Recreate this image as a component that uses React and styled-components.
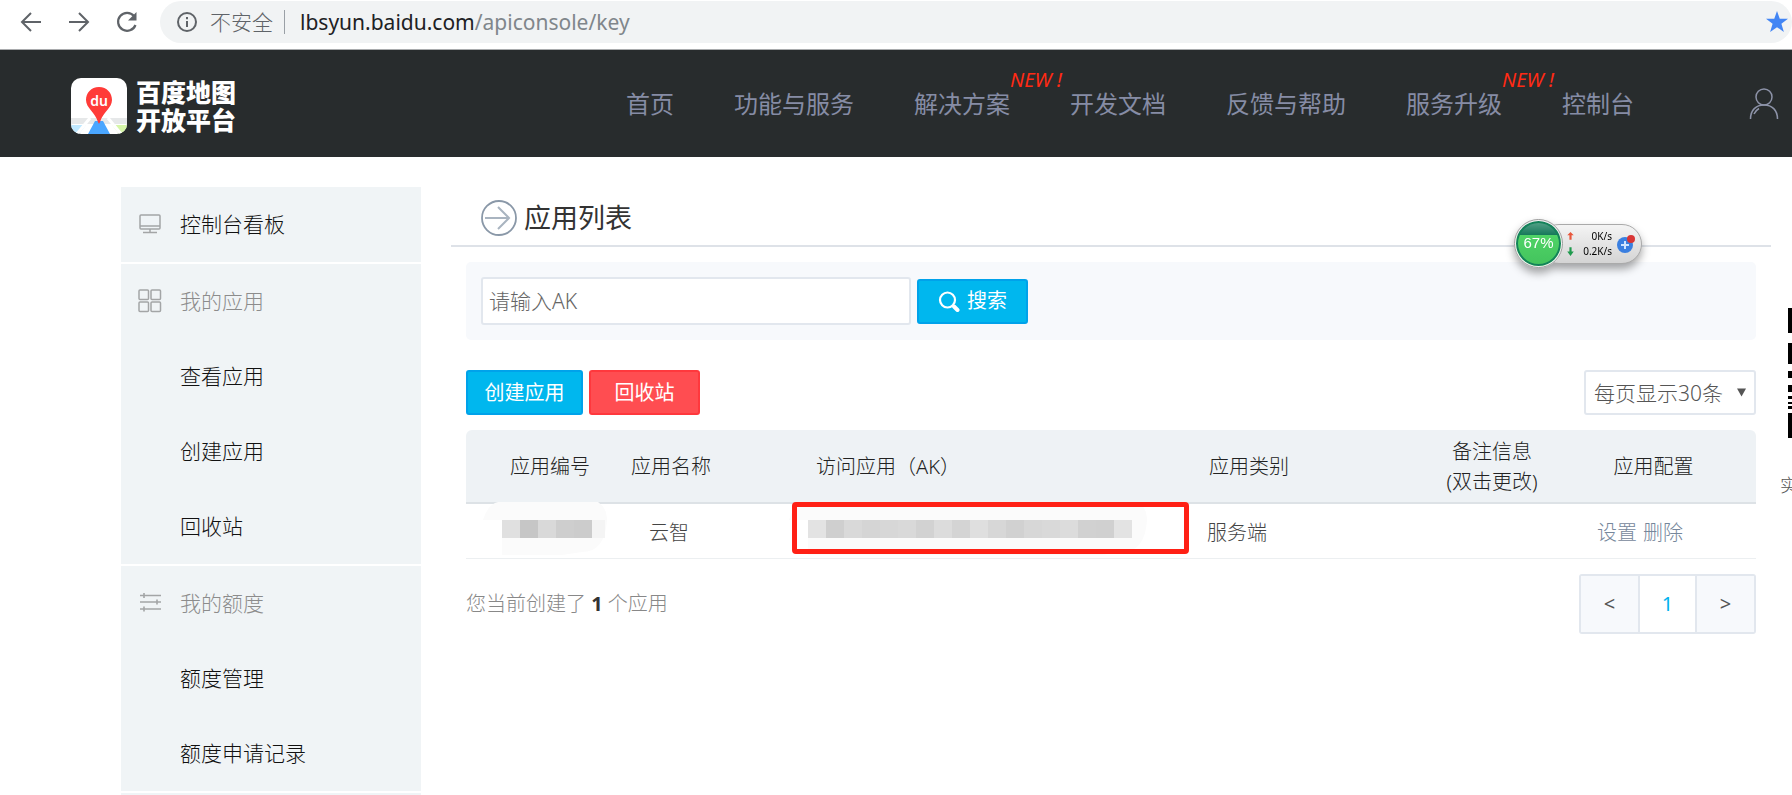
import React from "react";
import styled, { createGlobalStyle } from "styled-components";

const GlobalStyle = createGlobalStyle`
  * {
    box-sizing: border-box;
  }
  body {
    margin: 0;
    background: #fff;
    color: #333;
    font-family: "Noto Sans", "Noto Sans CJK SC", sans-serif;
    font-size: 20px;
    line-height: 30px;
  }
  a {
    color: inherit;
    text-decoration: none;
  }
  button, input, select {
    margin: 0;
    font: inherit;
  }
  svg {
    display: block;
    flex: none;
  }
`;

const Page = styled.div`
  height: 100vh;
  display: flex;
  flex-direction: column;
  overflow: hidden;
`;

/* browser bar */
const BrowserBar = styled.div`
  display: flex;
  align-items: flex-start;
  height: 50px;
  flex: none;
  padding: 1px 0 0 18px;
  border-bottom: 1px solid #a9abad;
`;
const BarButton = styled.button`
  width: 26px;
  height: 42px;
  margin-right: 22px;
  padding: 0;
  display: flex;
  align-items: center;
  justify-content: center;
  border: 0;
  background: none;
`;
const Address = styled.div`
  flex: 1;
  height: 42px;
  margin-left: -2px;
  padding: 0 4px 0 16px;
  display: flex;
  align-items: center;
  border-radius: 21px;
  background: #f1f3f4;
  color: #5f6368;
  font-size: 21px;
  white-space: nowrap;
`;
const Insecure = styled.span`
  margin-left: 12px;
  padding-right: 11px;
  font-weight: 300;
`;
const Url = styled.div`
  flex: 1;
  margin-left: 15px;
  color: #80868b;
`;
const Domain = styled.span`
  color: #202124;
`;
const BarDivider = styled.span`
  width: 1px;
  height: 24px;
  background: #9aa0a6;
`;

/* site header */
const Header = styled.header`
  display: flex;
  align-items: center;
  height: 107px;
  flex: none;
  padding: 0 13px 0 71px;
  background: #282c2d;
`;
const Brand = styled.a`
  display: flex;
  align-items: center;
  gap: 9px;
  padding-top: 4px;
`;
const BrandName = styled.span`
  color: #fff;
  font-size: 25px;
  font-weight: 900;
  line-height: 28px;
`;
const Nav = styled.nav`
  display: flex;
  gap: 60px;
  margin: 0 115px 0 auto;
  font-size: 24px;
  color: #868ca5;
  white-space: nowrap;
`;
const NavLink = styled.a`
  position: relative;
`;
const NewTag = styled.em`
  position: absolute;
  left: 100%;
  top: -24px;
  color: #ff2a14;
  font-size: 20px;
`;

/* content */
const Content = styled.div`
  flex: 1;
  min-height: 0;
  display: flex;
  padding: 30px 0 0 121px;
`;
const Sidebar = styled.aside`
  width: 300px;
  flex: none;
  display: flex;
  flex-direction: column;
  gap: 2px;
  margin-right: 30px;
  font-size: 21px;
  font-weight: 300;
`;
const MenuGroup = styled.div`
  flex: ${(p) => (p.$fill ? "1" : "none")};
  background: #f0f4f6;
`;
const MenuItem = styled.a`
  display: flex;
  align-items: center;
  height: 75px;
  padding-bottom: 2px;
  color: ${(p) => (p.$muted ? "#8c8c8c" : "#111")};
`;
const MenuIcon = styled.span`
  width: 59px;
  padding-left: 17px;
`;
const Main = styled.main`
  flex: 1;
  min-width: 0;
`;
const TitleBar = styled.div`
  display: flex;
  align-items: center;
  gap: 7px;
  height: 60px;
  padding: 4px 0 0 30px;
  border-bottom: 2px solid #dee2e8;
`;
const Title = styled.h1`
  margin: 0;
  font-size: 27px;
  font-weight: 400;
  line-height: 40px;
`;
const Panel = styled.div`
  padding: 15px;
`;
const SearchBox = styled.form`
  display: flex;
  align-items: center;
  gap: 6px;
  height: 78px;
  padding: 0 15px;
  border-radius: 5px;
  background: #f7f9fc;
`;
const SearchInput = styled.input`
  width: 430px;
  height: 48px;
  padding: 0 6px;
  border: 2px solid #e2e7ee;
  border-radius: 3px;
  background: #fff;
  font-size: 21px;
  font-weight: 300;
  &::placeholder {
    color: #666;
    opacity: 1;
  }
`;
const Button = styled.button`
  display: flex;
  align-items: center;
  justify-content: center;
  gap: 7px;
  min-width: ${(p) => (p.$wide ? "117px" : "111px")};
  height: 45px;
  padding: 0;
  border: 2px solid ${(p) => (p.$danger ? "#ff383d" : "#00a2ea")};
  border-radius: 3px;
  background: ${(p) => (p.$danger ? "#ff4d51" : "#00b7ee")};
  color: #fff;
`;
const Toolbar = styled.div`
  display: flex;
  gap: 6px;
  margin: 30px 0 15px;
`;
const SelectBox = styled.div`
  display: grid;
  align-items: center;
  margin-left: auto;
  & > * {
    grid-area: 1 / 1;
  }
`;
const PageSize = styled.select`
  width: 172px;
  height: 45px;
  padding: 0 8px;
  appearance: none;
  border: 2px solid #e2e7ee;
  border-radius: 3px;
  background: #fff;
  color: #555;
  font-size: 21px;
  font-weight: 300;
`;
const SelectArrow = styled.svg`
  justify-self: end;
  margin-right: 10px;
  pointer-events: none;
`;
const Table = styled.table`
  width: 100%;
  table-layout: fixed;
  border-collapse: separate;
  border-spacing: 0;
`;
const Col = styled.col`
  width: ${(p) => p.$w};
`;
const Th = styled.th`
  height: 74px;
  padding: 2px 0 0 ${(p) => p.$left || 0}px;
  border-bottom: 2px solid #dde2e6;
  background: #eef2f5;
  color: #222;
  font-weight: 300;
  text-align: ${(p) => (p.$center ? "center" : "left")};
  &:first-child {
    border-top-left-radius: 6px;
  }
  &:last-child {
    border-top-right-radius: 6px;
    padding-right: 32px;
  }
`;
const Td = styled.td`
  position: relative;
  height: 55px;
  padding: 4px ${(p) => (p.$center ? 4 : 0)}px 0 ${(p) => p.$left || 0}px;
  border-bottom: 1px solid #eceff1;
  color: #444;
  font-weight: 300;
  text-align: ${(p) => (p.$center ? "center" : "left")};
`;
const Marker = styled.div`
  position: absolute;
  left: 81px;
  right: 16px;
  top: -2px;
  height: 52px;
  border: 5px solid #ff2015;
  border-radius: 4px;
`;
const Action = styled.a`
  margin-right: 6px;
  color: #76879b;
`;
const Footer = styled.div`
  display: flex;
  align-items: center;
  justify-content: space-between;
  margin-top: 15px;
  color: #888;
  font-weight: 300;
`;
const Count = styled.b`
  color: #333;
  font-weight: 700;
`;
const Pager = styled.nav`
  display: flex;
  height: 60px;
  border: 2px solid #e2e7ee;
  border-radius: 3px;
`;
const PagerButton = styled.button`
  width: ${(p) => (p.$current ? "59px" : "57px")};
  padding: 0;
  border: 0 solid #e2e7ee;
  border-width: ${(p) => (p.$current ? "0 2px" : "0")};
  background: ${(p) => (p.$current ? "#fff" : "#f7f9fc")};
  color: ${(p) => (p.$current ? "#00b2ee" : "#555")};
  font-weight: 400;
`;
const Rail = styled.aside`
  width: 21px;
  flex: none;
  padding-top: 121px;
  overflow: hidden;
`;
const QrEdge = styled.svg`
  margin-left: 17px;
`;
const RailText = styled.div`
  width: 36px;
  margin: 32px 0 0 9px;
  color: #555;
  font-size: 18px;
  font-weight: 300;
`;

/* floating speed meter */
const Meter = styled.div`
  position: fixed;
  top: 219px;
  right: 150px;
  display: flex;
  align-items: center;
  filter: drop-shadow(0 5px 4px rgba(0, 0, 0, 0.35));
`;
const Ball = styled.div`
  width: 49px;
  height: 49px;
  border: 2px solid #f4f4f4;
  outline: 1px solid #9b9b9b;
  outline-offset: -1px;
  border-radius: 50%;
  background: linear-gradient(#5aa58c, #197a5c 30%, #4fd366 31%, #43c35d);
  box-shadow: inset 0 0 0 2px #14825a;
  color: #fff;
  font-family: "Liberation Sans", sans-serif;
  font-size: 15px;
  line-height: 44px;
  text-align: center;
  z-index: 1;
`;
const Pill = styled.div`
  display: flex;
  align-items: center;
  width: 103px;
  height: 40px;
  margin-left: -24px;
  padding: 0 5px 0 27px;
  border: 1px solid #aaa;
  border-radius: 20px;
  background: linear-gradient(#f4f4f4, #d4d4d4);
`;
const Speeds = styled.div`
  width: 40px;
  margin-right: 4px;
  color: #000;
  font-size: 10px;
  line-height: 15px;
  text-align: right;
`;

const HIDDEN_ID = ["#e0e0e0", "#c6c6c6", "#d9d9d9", "#cecece", "#cccccc"];
const HIDDEN_KEY = [
  "#e3e3e3", "#cfcfcf", "#d9d9d9", "#d5d5d5", "#d7d7d7", "#d9d9d9",
  "#d2d2d2", "#dcdcdc", "#d4d4d4", "#dfdfdf", "#d7d7d7", "#d1d1d1",
  "#d7d7d7", "#d9d9d9", "#dcdcdc", "#d1d1d1", "#d0d0d0", "#e3e3e3",
];

function Mosaic({ colors, tail }) {
  const w = colors.length * 18;
  return (
    <svg width={w + 40} height="54" viewBox={`-19 0 ${w + 40} 54`}>
      <path d={`M-19 18Q-14 2 -4 0H${w + 6}Q${w + 15} 6 ${w + 15} 18Q${w + 13} 50 ${w - 10} 50L${w - 30} 53H0V18Z`} fill="#fbfbfb" />
      {tail && <rect x={w} y="18" width="13" height="18" fill="#f4f4f4" />}
      {colors.map((c, i) => (
        <rect key={i} x={i * 18} y="18" width="18" height="18" fill={c} />
      ))}
    </svg>
  );
}
const MosaicBox = styled.div`
  position: absolute;
  left: ${(p) => p.$left}px;
  top: -2px;
`;

function Logo() {
  return (
    <svg width="56" height="56" viewBox="0 0 56 56">
      <defs>
        <clipPath id="tile">
          <rect width="56" height="56" rx="10" />
        </clipPath>
      </defs>
      <g clipPath="url(#tile)">
        <path d="M0 0H56V56H0z" fill="#fff" />
        <path d="M0 40H56V46H0z" fill="#e6e8e9" />
        <path d="M0 47H15L8 56H0z" fill="#bfe8ff" />
        <path d="M41 47H56V56H48z" fill="#d5f5a8" />
        <path d="M19 40L6 56M37 40L50 56" stroke="#fff" strokeWidth="3" />
        <path d="M24 43H32L39 56H17z" fill="#4aa6ff" />
        <path d="M28 9C20 9 15 15 15 22C15 30 24 34 27 44Q28 47 29 44C32 34 41 30 41 22C41 15 36 9 28 9z" fill="#ff3b38" />
      </g>
      <text x="28" y="28" fill="#fff" fontSize="14" fontWeight="600" textAnchor="middle">du</text>
    </svg>
  );
}

const NAV = [
  { label: "首页" },
  { label: "功能与服务" },
  { label: "解决方案", isNew: true },
  { label: "开发文档" },
  { label: "反馈与帮助" },
  { label: "服务升级", isNew: true },
  { label: "控制台" },
];

const iconProps = { width: 24, height: 24, viewBox: "0 0 24 24", fill: "none", stroke: "#a3a5a6" };

const MonitorIcon = () => (
  <svg {...iconProps} strokeWidth="1.5">
    <rect x="2" y="3" width="20" height="14" rx="1" />
    <path d="M2 14H22M12 17V20M5 20.5H19" />
  </svg>
);
const GridIcon = () => (
  <svg {...iconProps} strokeWidth="1.5">
    <rect x="1" y="1" width="9.5" height="9.5" rx="1" />
    <rect x="13" y="1" width="9.5" height="9.5" rx="1" />
    <rect x="1" y="13" width="9.5" height="9.5" rx="1" />
    <rect x="13" y="13" width="9.5" height="9.5" rx="1" />
  </svg>
);
const SlidersIcon = () => (
  <svg {...iconProps} strokeWidth="1.6">
    <path d="M2 4.5H23M2 11H23M2 18H23M6 2V7M19 8.5V13.5M6 15.5V20.5" />
  </svg>
);

const MENU = [
  [{ label: "控制台看板", icon: <MonitorIcon /> }],
  [
    { label: "我的应用", icon: <GridIcon />, muted: true },
    { label: "查看应用" },
    { label: "创建应用" },
    { label: "回收站" },
  ],
  [
    { label: "我的额度", icon: <SlidersIcon />, muted: true },
    { label: "额度管理" },
    { label: "额度申请记录" },
  ],
];

function App() {
  return (
    <Page>
      <GlobalStyle />
      <BrowserBar>
        <BarButton aria-label="后退">
          <svg width="22" height="22" viewBox="0 0 22 22" fill="none" stroke="#5f6368" strokeWidth="2">
            <path d="M21 11H2M11 2L2 11L11 20" />
          </svg>
        </BarButton>
        <BarButton aria-label="前进">
          <svg width="22" height="22" viewBox="0 0 22 22" fill="none" stroke="#5f6368" strokeWidth="2">
            <path d="M1 11H20M11 2L20 11L11 20" />
          </svg>
        </BarButton>
        <BarButton aria-label="刷新">
          <svg width="24" height="24" viewBox="0 0 24 24" fill="none" stroke="#5f6368" strokeWidth="2.2">
            <path d="M19 6A9 9 0 1 0 20.5 15" />
            <path d="M21.5 2V10.5H13z" fill="#5f6368" stroke="none" />
          </svg>
        </BarButton>
        <Address>
          <svg width="22" height="22" viewBox="0 0 22 22" fill="none" stroke="#5f6368" strokeWidth="2">
            <circle cx="11" cy="11" r="9" />
            <path d="M11 10V16M11 6V8.2" />
          </svg>
          <Insecure>不安全</Insecure>
          <BarDivider />
          <Url>
            <Domain>lbsyun.baidu.com</Domain>/apiconsole/key
          </Url>
          <svg width="22" height="22" viewBox="0 0 24 24" fill="#4285f4">
            <path d="M12 0L15 8.5H24L16.8 13.8L19.5 23L12 17.6L4.5 23L7.2 13.8L0 8.5H9z" />
          </svg>
        </Address>
      </BrowserBar>

      <Header>
        <Brand href="#">
          <Logo />
          <BrandName>
            百度地图
            <br />
            开放平台
          </BrandName>
        </Brand>
        <Nav>
          {NAV.map((item) => (
            <NavLink href="#" key={item.label}>
              {item.label}
              {item.isNew && <NewTag>NEW !</NewTag>}
            </NavLink>
          ))}
        </Nav>
        <svg width="30" height="32" viewBox="0 0 30 32" fill="none" stroke="#8d93a8" strokeWidth="1.5">
          <ellipse cx="15" cy="9" rx="8" ry="8" />
          <path d="M1.5 31C1.5 22 7 17 15 17C23 17 28.5 22 28.5 31M5 26Q6.5 22.5 10 20.5" />
        </svg>
      </Header>

      <Content>
        <Sidebar>
          {MENU.map((group, i) => (
            <MenuGroup key={i}>
              {group.map((item) => (
                <MenuItem href="#" key={item.label} $muted={item.muted}>
                  <MenuIcon>{item.icon}</MenuIcon>
                  {item.label}
                </MenuItem>
              ))}
            </MenuGroup>
          ))}
          <MenuGroup $fill />
        </Sidebar>

        <Main>
          <TitleBar>
            <svg width="36" height="36" viewBox="0 0 36 36" fill="none" stroke="#8a98a8" strokeWidth="2">
              <circle cx="18" cy="18" r="17" strokeWidth="1.8" />
              <path d="M4 18H28M17 7L28 18L17 29" stroke="#a9b4c0" />
            </svg>
            <Title>应用列表</Title>
          </TitleBar>
          <Panel>
            <SearchBox>
              <SearchInput aria-label="AK" placeholder="请输入AK" />
              <Button type="button">
                <svg width="22" height="22" viewBox="0 0 22 22" fill="none" stroke="#fff">
                  <circle cx="9.5" cy="10" r="7.5" strokeWidth="2.2" />
                  <path d="M16 16.5L19.500 20" strokeWidth="4" strokeLinecap="round" />
                </svg>
                搜索
              </Button>
            </SearchBox>
            <Toolbar>
              <Button $wide>创建应用</Button>
              <Button $danger>回收站</Button>
              <SelectBox>
                <PageSize aria-label="每页显示">
                  <option>每页显示30条</option>
                </PageSize>
                <SelectArrow width="9" height="9" viewBox="0 0 10 9">
                  <path d="M0 0H10L5 9z" fill="#555" />
                </SelectArrow>
              </SelectBox>
            </Toolbar>
            <Table>
              <colgroup>
                <Col $w="165px" />
                <Col $w="80px" />
                <Col />
                <Col $w="196px" />
                <Col $w="182px" />
                <Col $w="173px" />
              </colgroup>
              <thead>
                <tr>
                  <Th $left={44}>应用编号</Th>
                  <Th $center>应用名称</Th>
                  <Th $left={105}>访问应用（AK）</Th>
                  <Th $left={4}>应用类别</Th>
                  <Th $center>
                    备注信息
                    <br />
                    (双击更改)
                  </Th>
                  <Th $center>应用配置</Th>
                </tr>
              </thead>
              <tbody>
                <tr>
                  <Td>
                    <MosaicBox $left={17}>
                      <Mosaic colors={HIDDEN_ID} tail />
                    </MosaicBox>
                  </Td>
                  <Td $center>云智</Td>
                  <Td>
                    <MosaicBox $left={78}>
                      <Mosaic colors={HIDDEN_KEY} />
                    </MosaicBox>
                    <Marker />
                  </Td>
                  <Td $left={2}>服务端</Td>
                  <Td />
                  <Td $left={14}>
                    <Action href="#">设置</Action>
                    <Action href="#">删除</Action>
                  </Td>
                </tr>
              </tbody>
            </Table>
            <Footer>
              <span>
                您当前创建了 <Count>1</Count> 个应用
              </span>
              <Pager>
                <PagerButton>&lt;</PagerButton>
                <PagerButton $current>1</PagerButton>
                <PagerButton>&gt;</PagerButton>
              </Pager>
            </Footer>
          </Panel>
        </Main>

        <Rail>
          <QrEdge width="4" height="130" viewBox="0 0 4 130">
            <path d="M0 0H4V25H0zM0 35H4V56H0zM0 63H4V70H0zM0 77H4V84H0zM0 88H4V91H0zM0 94H4V96H0zM0 98H4V101H0zM0 105H4V130H0z" />
          </QrEdge>
          <RailText>实</RailText>
        </Rail>
      </Content>

      <Meter>
        <Ball>67%</Ball>
        <Pill>
          <svg width="7" height="26" viewBox="0 0 6 24">
            <path d="M3 1L6 4H4V8H2V4H0z" fill="#e8573c" />
            <path d="M3 23L6 19H4V15H2V19H0z" fill="#1f9a4d" />
          </svg>
          <Speeds>
            0K/s
            <br />
            0.2K/s
          </Speeds>
          <svg width="20" height="20" viewBox="0 0 20 20">
            <circle cx="9" cy="11" r="8" fill="#3a7fe0" />
            <path d="M9 7V15M5 11H13" stroke="#cfe4ff" strokeWidth="2" />
            <circle cx="15" cy="5" r="4" fill="#d93636" />
          </svg>
        </Pill>
      </Meter>
    </Page>
  );
}

export default App;
